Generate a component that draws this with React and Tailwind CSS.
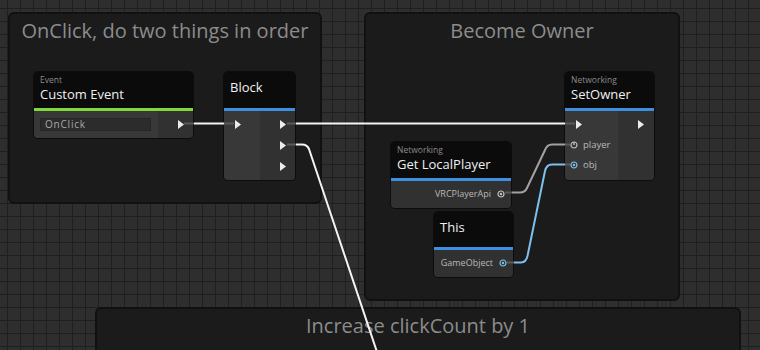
import React from 'react';

const font = { fontFamily: '"Open Sans", "Noto Sans", sans-serif' };

function Arrow() {
  return (
    <svg width="6" height="9" viewBox="0 0 6 9" className="shrink-0">
      <polygon points="0,0 6,4.5 0,9" fill="#ececec" />
    </svg>
  );
}

function DataPort({ color = '#7ec0ee', player = false }) {
  return (
    <svg width="8" height="8" viewBox="0 0 8 8" className="shrink-0">
      <circle cx="4" cy="4" r="3" fill="none" stroke={color} strokeWidth="1.2" />
      {player ? (
        <line x1="4" y1="1" x2="4" y2="4" stroke={color} strokeWidth="1.4" />
      ) : (
        <circle cx="4" cy="4" r="1.2" fill={color} />
      )}
    </svg>
  );
}

function Group({ className, title }) {
  return (
    <div
      className={`absolute rounded-[6px] border-2 border-[#111111] bg-[#1b1b1b] ${className}`}
    >
      <div className="pt-[3px] text-center text-[20px] leading-[28px] text-[#8c8c8c]">{title}</div>
    </div>
  );
}

function Header({ cat, title, bar, tall = true }) {
  return (
    <>
      <div className={`bg-[#0b0b0b] px-[6px] ${tall ? 'h-[36px]' : 'h-[35px]'} ${cat ? 'pt-[2px]' : 'pt-[6px]'}`}>
        {cat && <div className="h-[11px] text-[8.5px] leading-[11px] text-[#8a8a8a]">{cat}</div>}
        <div className="text-[13px] leading-[18px] text-[#f0f0f0]">{title}</div>
      </div>
      <div className={`h-[3px] ${bar}`} />
    </>
  );
}

export default function App() {
  return (
    <div
      style={font}
      className="relative h-[350px] w-[760px] overflow-hidden bg-[#2e2e2e] bg-[linear-gradient(to_right,#1f1f1f_1px,transparent_1px),linear-gradient(to_bottom,#1f1f1f_1px,transparent_1px)] bg-[size:13px_13px] bg-[position:7px_8px]"
    >
      <div className="absolute left-[618px] top-[220px] text-[42px] font-bold leading-[50px] tracking-[2px] text-white/[0.02]">
        ALPHA
      </div>

      <Group className="left-[8px] top-[12px] h-[192px] w-[314px]" title="OnClick, do two things in order" />
      <Group className="left-[364px] top-[12px] h-[289px] w-[316px]" title="Become Owner" />
      <Group className="left-[95px] top-[307px] h-[80px] w-[646px]" title="Increase clickCount by 1" />

      {/* Custom Event */}
      <div className="absolute left-[33px] top-[71px] w-[161px] overflow-hidden rounded-[5px] border border-[#0c0c0c]">
        <Header cat="Event" title="Custom Event" bar="bg-[#7fd93a]" />
        <div className="flex h-[27px]">
          <div className="flex w-[124px] items-center bg-[#383838] pl-[6px]">
            <div className="flex h-[13px] w-[111px] items-center border border-[#262626] bg-[#2c2c2c] pl-[4px] text-[10px] tracking-[0.8px] text-[#a8a8a8]">
              OnClick
            </div>
          </div>
          <div className="flex flex-1 items-center justify-end bg-[#313131] pr-[9px]">
            <Arrow />
          </div>
        </div>
      </div>

      {/* Block */}
      <div className="absolute left-[223px] top-[71px] w-[73px] overflow-hidden rounded-[5px] border border-[#0c0c0c]">
        <Header title="Block" bar="bg-[#3f8fe0]" />
        <div className="flex h-[69px]">
          <div className="w-[36px] bg-[#383838] pl-[11px] pt-[3px]">
            <div className="flex h-[21px] items-center">
              <Arrow />
            </div>
          </div>
          <div className="flex flex-1 flex-col items-end bg-[#313131] pr-[9px] pt-[3px]">
            <div className="flex h-[21px] items-center"><Arrow /></div>
            <div className="flex h-[21px] items-center"><Arrow /></div>
            <div className="flex h-[21px] items-center"><Arrow /></div>
          </div>
        </div>
      </div>

      {/* SetOwner */}
      <div className="absolute left-[564px] top-[71px] w-[91px] overflow-hidden rounded-[5px] border border-[#0c0c0c]">
        <Header cat="Networking" title="SetOwner" bar="bg-[#3f8fe0]" />
        <div className="flex h-[69px]">
          <div className="flex w-[53px] flex-col bg-[#383838] pl-[5px] pt-[3px] text-[9.5px] text-[#b8b8b8]">
            <div className="flex h-[21px] items-center pl-[6px]">
              <Arrow />
            </div>
            <div className="flex h-[20px] items-center gap-[5px]">
              <DataPort color="#bdbdbd" player />
              <span>player</span>
            </div>
            <div className="flex h-[20px] items-center gap-[5px]">
              <DataPort />
              <span>obj</span>
            </div>
          </div>
          <div className="flex flex-1 flex-col items-end bg-[#313131] pr-[10px] pt-[3px]">
            <div className="flex h-[21px] items-center"><Arrow /></div>
          </div>
        </div>
      </div>

      {/* Get LocalPlayer */}
      <div className="absolute left-[390px] top-[141px] w-[122px] overflow-hidden rounded-[5px] border border-[#0c0c0c]">
        <Header cat="Networking" title="Get LocalPlayer" bar="bg-[#3f8fe0]" />
        <div className="flex h-[27px] items-start justify-end bg-[#313131] pr-[6px] pt-[2px] text-[9px] text-[#b8b8b8]">
          <div className="flex h-[21px] items-center gap-[6px]">
            <span>VRCPlayerApi</span>
            <DataPort color="#c4c4c4" />
          </div>
        </div>
      </div>

      {/* This */}
      <div className="absolute left-[433px] top-[211px] w-[81px] overflow-hidden rounded-[5px] border border-[#0c0c0c]">
        <Header title="This" bar="bg-[#3f8fe0]" tall={false} />
        <div className="flex h-[27px] items-start justify-end bg-[#313131] pr-[6px] pt-[2px] text-[9px] text-[#b8b8b8]">
          <div className="flex h-[21px] items-center gap-[6px]">
            <span>GameObject</span>
            <DataPort />
          </div>
        </div>
      </div>

      {/* wires */}
      <svg className="pointer-events-none absolute left-0 top-0" width="760" height="350" fill="none">
        <g stroke="#5a5a5a" strokeWidth="2">
          <line x1="184" y1="123.5" x2="194" y2="123.5" />
          <line x1="224" y1="123.5" x2="234" y2="123.5" />
          <line x1="287" y1="123.5" x2="296" y2="123.5" />
          <line x1="287" y1="144.5" x2="296" y2="144.5" />
          <line x1="565" y1="123.5" x2="575" y2="123.5" />
          <line x1="565" y1="144.5" x2="570" y2="144.5" />
          <line x1="565" y1="164.5" x2="570" y2="164.5" />
          <line x1="505" y1="192.5" x2="512" y2="192.5" />
          <line x1="507" y1="262.5" x2="514" y2="262.5" />
        </g>
        <g stroke="#f4f4f4" strokeWidth="2">
          <line x1="194" y1="123.5" x2="224" y2="123.5" />
          <line x1="296" y1="123.5" x2="565" y2="123.5" />
          <path d="M296 144.5 L302 144.5 Q307 144.5 309 149 L377 352" />
        </g>
        <path d="M512 192.5 L520 192.5 Q525 192.5 527 188 L545 150 Q547 144.5 552 144.5 L565 144.5" stroke="#a2a2a2" strokeWidth="2" />
        <path d="M514 262.5 L521 262.5 Q526 262.5 527.5 256 L545 171 Q546.5 164.5 552 164.5 L565 164.5" stroke="#7ec0ee" strokeWidth="2" />
      </svg>
    </div>
  );
}
